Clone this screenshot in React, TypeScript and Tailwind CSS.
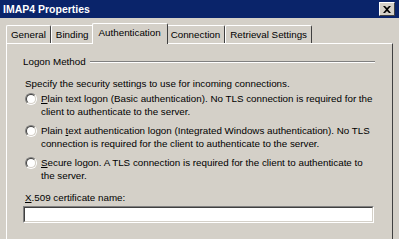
const font = { fontFamily: "'Liberation Sans', Arial, sans-serif" };

const tabs = ["General", "Binding", "Authentication", "Connection", "Retrieval Settings"];

function Radio() {
  return (
    <span className="relative mt-[1px] block h-[12px] w-[12px] shrink-0 rounded-full border border-t-[#808080] border-l-[#808080] border-r-white border-b-white">
      <span className="absolute inset-0 rounded-full border border-t-[#404040] border-l-[#404040] border-r-[#d4d0c8] border-b-[#d4d0c8] bg-white" />
    </span>
  );
}

export default function App() {
  return (
    <div className="h-[239px] w-[399px] overflow-hidden whitespace-nowrap bg-[#d4d0c8] text-[9.8px] leading-[13px] text-black" style={font}>
      <div className="flex h-[18px] items-center justify-between bg-[#0a246a] pl-[3px] pr-[4px]">
        <span className="text-[10.5px] font-bold text-white">IMAP4 Properties</span>
        <span className="flex h-[14px] w-[16px] items-center justify-center border border-t-white border-l-white border-r-[#404040] border-b-[#404040] bg-[#d4d0c8]">
          <svg width="8" height="7" viewBox="0 0 8 7">
            <path d="M0 0h2l2 2 2-2h2L5 3.5 8 7H6L4 5 2 7H0l3-3.5z" fill="#000" />
          </svg>
        </span>
      </div>

      <div className="mt-[5px] flex h-[20px] items-end pl-[6px]">
        {tabs.map((t) => {
          const active = t === "Authentication";
          return (
            <div
              key={t}
              className={
                active
                  ? "relative z-10 -mx-[2px] mb-[-1px] flex h-[21px] items-center rounded-t-[2px] border border-b-0 border-t-white border-l-white border-r-[#404040] bg-[#d4d0c8] px-[6px] pb-[3px]"
                  : "flex h-[18px] items-center rounded-t-[2px] border border-b-0 border-t-white border-l-white border-r-[#404040] px-[4px]"
              }
            >
              {t}
            </div>
          );
        })}
      </div>

      <div className="mx-[6px] h-[200px] border border-b-0 border-t-white border-l-white border-r-[#404040] px-[16px] pt-[11px]">
        <div className="flex items-center">
          <span className="pr-[4px]">Logon Method</span>
          <span className="mr-[1px] flex-1 border-t border-b border-t-[#808080] border-b-white" />
        </div>

        <div className="mt-[9px] pl-[2px]">Specify the security settings to use for incoming connections.</div>

        <div className="mt-[2px] flex flex-col gap-[6px] pl-[2px]">
          <div className="flex gap-[4px]">
            <Radio />
            <div>
              <div>
                <span className="underline">P</span>lain text logon (Basic authentication). No TLS connection is required for the
              </div>
              <div>client to authenticate to the server.</div>
            </div>
          </div>
          <div className="flex gap-[4px]">
            <Radio />
            <div>
              <div>
                Plain <span className="underline">t</span>ext authentication logon (Integrated Windows authentication). No TLS
              </div>
              <div>connection is required for the client to authenticate to the server.</div>
            </div>
          </div>
          <div className="flex gap-[4px]">
            <Radio />
            <div>
              <div>
                <span className="underline">S</span>ecure logon. A TLS connection is required for the client to authenticate to
              </div>
              <div>the server.</div>
            </div>
          </div>
        </div>

        <div className="mt-[9px] pl-[2px]">
          <span className="underline">X</span>.509 certificate name:
        </div>
        <div className="mt-[2px] h-[17px] w-[351px] border border-t-[#808080] border-l-[#808080] border-r-white border-b-white">
          <div className="h-full border border-t-[#404040] border-l-[#404040] border-r-[#d4d0c8] border-b-[#d4d0c8] bg-white" />
        </div>
      </div>
    </div>
  );
}
